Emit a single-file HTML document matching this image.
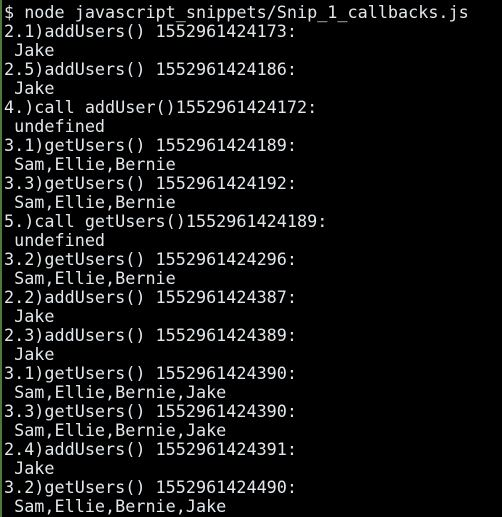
<!DOCTYPE html>
<html><head><style>
html,body{margin:0;padding:0;background:#000;width:502px;height:517px;overflow:hidden}
.bar{position:absolute;left:0;top:0;width:2px;height:517px;background:#4c7a3c}
pre{position:absolute;left:4px;top:3px;margin:0;font-family:"DejaVu Sans Mono","Liberation Mono",monospace;font-size:16.8px;line-height:19px;color:#e2e8ec}
</style></head><body><div class="bar"></div><pre>$ node javascript_snippets/Snip_1_callbacks.js
2.1)addUsers() 1552961424173:
 Jake
2.5)addUsers() 1552961424186:
 Jake
4.)call addUser()1552961424172:
 undefined
3.1)getUsers() 1552961424189:
 Sam,Ellie,Bernie
3.3)getUsers() 1552961424192:
 Sam,Ellie,Bernie
5.)call getUsers()1552961424189:
 undefined
3.2)getUsers() 1552961424296:
 Sam,Ellie,Bernie
2.2)addUsers() 1552961424387:
 Jake
2.3)addUsers() 1552961424389:
 Jake
3.1)getUsers() 1552961424390:
 Sam,Ellie,Bernie,Jake
3.3)getUsers() 1552961424390:
 Sam,Ellie,Bernie,Jake
2.4)addUsers() 1552961424391:
 Jake
3.2)getUsers() 1552961424490:
 Sam,Ellie,Bernie,Jake</pre></body></html>
